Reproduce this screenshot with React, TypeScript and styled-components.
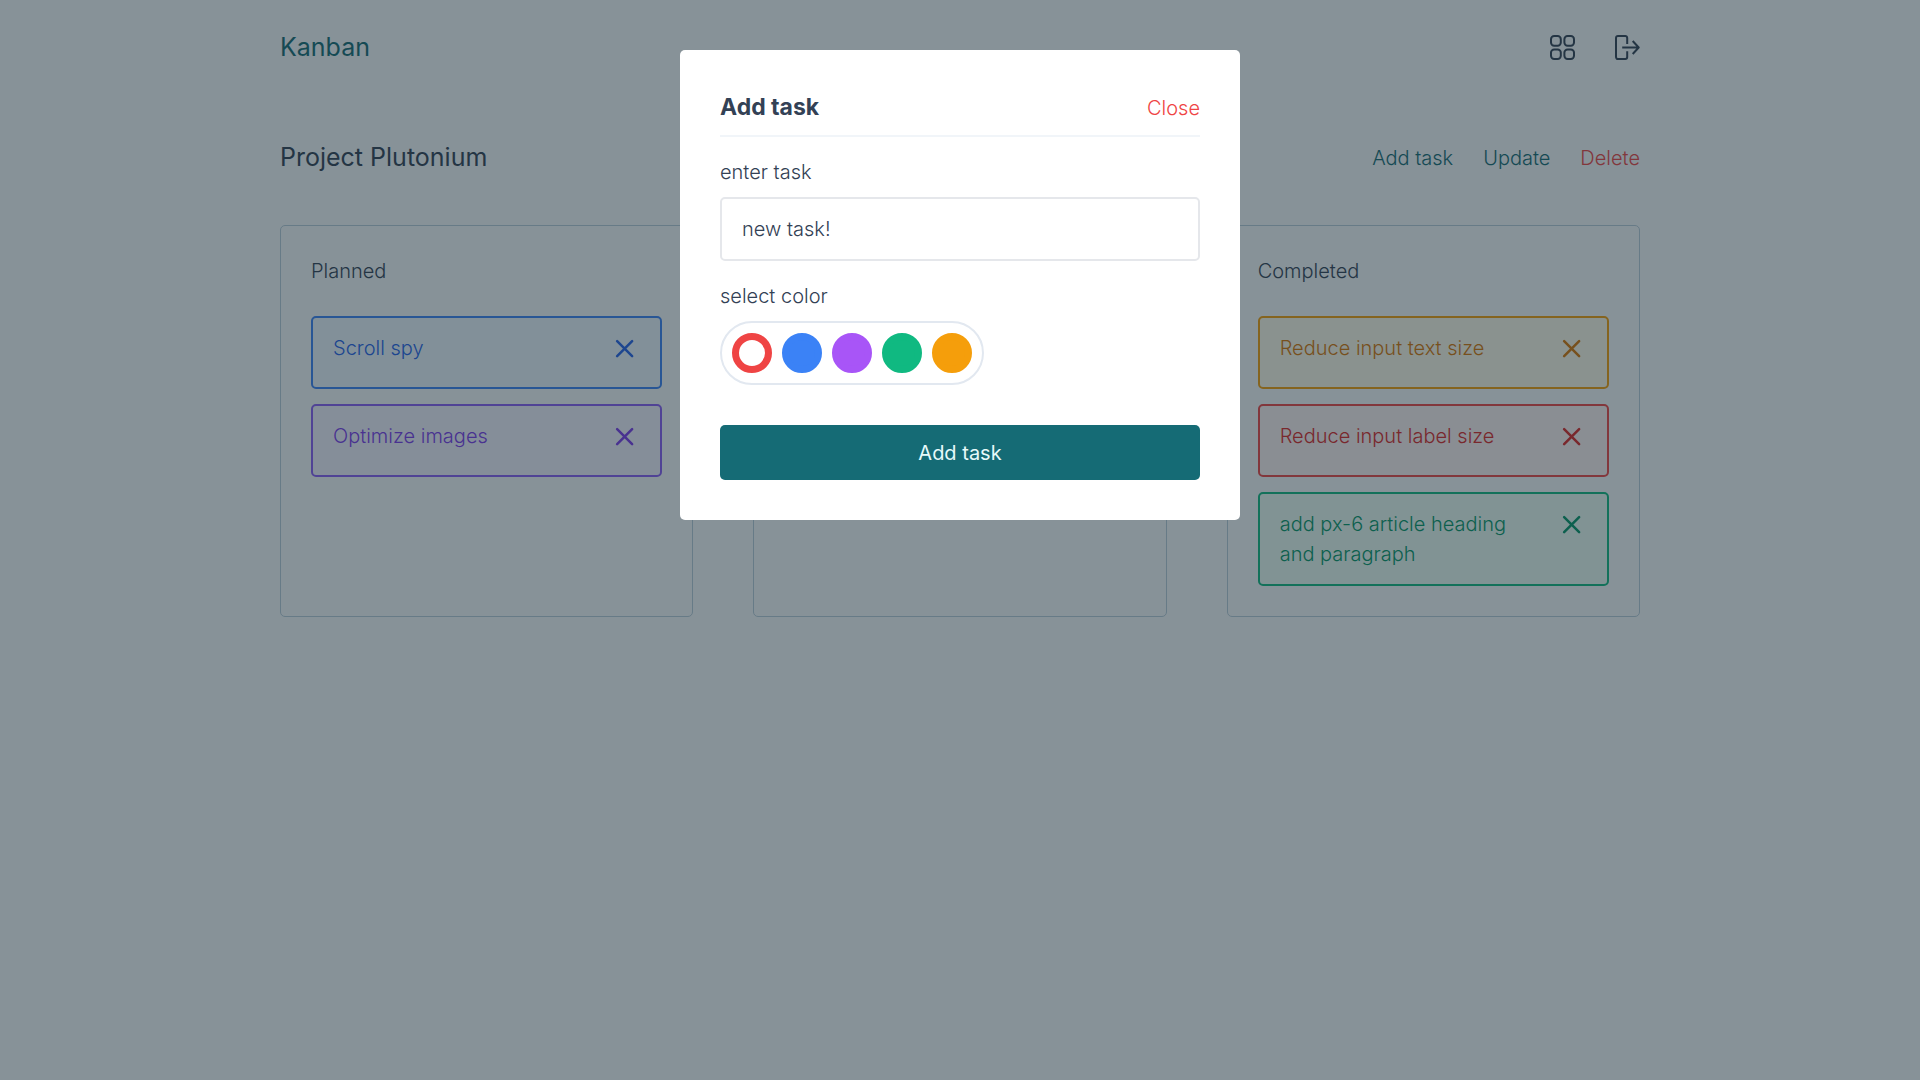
import React, { useState } from "react";
import styled, { createGlobalStyle } from "styled-components";

const GlobalStyle = createGlobalStyle`
  *, *::before, *::after { box-sizing: border-box; }
  body {
    margin: 0;
    background: #f8fafc;
    color: #334155;
    font-family: Inter, "Liberation Sans", sans-serif;
    font-size: 20px;
    font-weight: 300;
    line-height: 30px;
  }
  h1, h2, h3, p, ul, fieldset { margin: 0; padding: 0; }
  button, input { font: inherit; color: inherit; }
`;

type Tone = "red" | "blue" | "violet" | "green" | "amber";

const tones: Record<Tone, { line: string; text: string; fill: string; swatch: string }> = {
  red: { line: "#ef4444", text: "#dc2626", fill: "#fef2f2", swatch: "#ef4444" },
  blue: { line: "#3b82f6", text: "#2563eb", fill: "#eff6ff", swatch: "#3b82f6" },
  violet: { line: "#8b5cf6", text: "#7c3aed", fill: "#f5f3ff", swatch: "#a855f7" },
  green: { line: "#10b981", text: "#059669", fill: "#ecfdf5", swatch: "#10b981" },
  amber: { line: "#f59e0b", text: "#d97706", fill: "#fffbeb", swatch: "#f59e0b" },
};

const Page = styled.div`
  width: 100%;
  max-width: 1400px;
  margin: 0 auto;
  padding: 0 20px;
`;

const TopBar = styled.header`
  display: flex;
  align-items: center;
  justify-content: space-between;
  padding: 30px 0;
`;

const Brand = styled.a`
  color: #156b75;
  font-size: 25px;
  font-weight: 400;
  line-height: 35px;
  text-decoration: none;
`;

const TopNav = styled.nav`
  display: flex;
  gap: 40px;
`;

const PlainButton = styled.button<{ $color?: string }>`
  display: block;
  padding: 0;
  border: 0;
  background: none;
  color: ${(p) => p.$color ?? "inherit"};
  cursor: pointer;

  svg {
    display: block;
  }
`;

const ProjectBar = styled.div`
  display: flex;
  align-items: center;
  justify-content: space-between;
  padding: 45px 0 50px;
`;

const ProjectName = styled.h1`
  font-size: 25px;
  font-weight: 400;
  line-height: 35px;
`;

const Actions = styled.div`
  display: flex;
  gap: 30px;
`;

const Board = styled.main`
  display: grid;
  grid-template-columns: repeat(3, minmax(0, 1fr));
  gap: 60px;
`;

const Column = styled.section`
  padding: 30px;
  border: 1px solid #b9ccda;
  border-radius: 5px;
`;

const ColumnTitle = styled.h2`
  font-size: 20px;
  font-weight: inherit;
  line-height: 30px;
`;

const TaskList = styled.ul`
  display: grid;
  gap: 15px;
  margin-top: 30px;
  list-style: none;
`;

const Task = styled.li<{ $tone: Tone }>`
  display: flex;
  align-items: flex-start;
  justify-content: space-between;
  gap: 20px;
  min-height: 73px;
  padding: 15px 20px;
  border: 2px solid ${(p) => tones[p.$tone].line};
  border-radius: 5px;
  background: ${(p) => tones[p.$tone].fill};
  color: ${(p) => tones[p.$tone].text};
`;

const Overlay = styled.div`
  position: fixed;
  inset: 0;
  display: flex;
  align-items: flex-start;
  justify-content: center;
  padding: 50px 20px;
  background: rgba(22, 42, 52, 0.5);
`;

const Dialog = styled.form`
  width: 100%;
  max-width: 560px;
  padding: 40px;
  border-radius: 5px;
  background: #fff;
`;

const DialogHead = styled.div`
  display: flex;
  align-items: center;
  justify-content: space-between;
  padding-bottom: 10px;
  border-bottom: 2px solid #f1f5f9;
`;

const DialogTitle = styled.h2`
  font-size: 23px;
  font-weight: 700;
  line-height: 35px;
`;

const Label = styled.label`
  display: block;
  margin: 20px 0 10px;
`;

const TextInput = styled.input`
  display: block;
  width: 100%;
  height: 64px;
  padding: 15px 20px;
  border: 2px solid #e5e7eb;
  border-radius: 5px;
  background: #fff;
  outline: none;
`;

const ColorField = styled.fieldset`
  min-width: 0;
  border: 0;
`;

const Legend = styled.legend`
  padding: 20px 0 10px;
`;

const Swatches = styled.div`
  display: flex;
  gap: 10px;
  width: fit-content;
  padding: 10px;
  border: 2px solid #e2e8f0;
  border-radius: 32px;
`;

const Swatch = styled.input<{ $tone: Tone }>`
  appearance: none;
  width: 40px;
  height: 40px;
  margin: 0;
  border: 7px solid ${(p) => tones[p.$tone].swatch};
  border-radius: 50%;
  background: ${(p) => tones[p.$tone].swatch};
  cursor: pointer;

  &:checked {
    background: #fff;
  }
`;

const Submit = styled.button`
  display: block;
  width: 100%;
  height: 55px;
  margin-top: 40px;
  padding: 0 20px;
  border: 0;
  border-radius: 5px;
  background: #156b75;
  color: #e6fafa;
  font-weight: 400;
  cursor: pointer;
`;

const GridIcon = () => (
  <svg width="25" height="25" viewBox="0 0 25 25" fill="none" stroke="currentColor" strokeWidth="2" aria-hidden="true">
    <rect x="1" y="1" width="9.8" height="9.8" rx="3.2" />
    <rect x="14.4" y="1" width="9.6" height="9.8" rx="3.2" />
    <rect x="1" y="14.4" width="9.8" height="9.6" rx="3.2" />
    <rect x="14.4" y="14.4" width="9.6" height="9.6" rx="3.2" />
  </svg>
);

const ExitIcon = () => (
  <svg width="25" height="25" viewBox="0 0 25 25" fill="none" stroke="currentColor" strokeWidth="2" strokeLinejoin="round" aria-hidden="true">
    <path d="M12.2 9V2.9a1.9 1.9 0 0 0-1.9-1.9H2.9A1.9 1.9 0 0 0 1 2.9v19.2A1.9 1.9 0 0 0 2.9 24h7.4a1.9 1.9 0 0 0 1.9-1.9V16.2" />
    <path d="M7.2 12.5H23.6M17.7 6l6 6.5-6 6.5" />
  </svg>
);

const CrossIcon = () => (
  <svg width="30" height="30" viewBox="0 0 24 24" fill="none" stroke="currentColor" strokeWidth="2" strokeLinecap="round" aria-hidden="true">
    <path d="M5.7 18.5l12-12M5.7 6.5l12 12" />
  </svg>
);

const columns: { title: string; visible: boolean; tasks: { text: string; tone: Tone }[] }[] = [
  {
    title: "Planned",
    visible: true,
    tasks: [
      { text: "Scroll spy", tone: "blue" },
      { text: "Optimize images", tone: "violet" },
    ],
  },
  { title: "Ongoing", visible: false, tasks: [] },
  {
    title: "Completed",
    visible: true,
    tasks: [
      { text: "Reduce input text size", tone: "amber" },
      { text: "Reduce input label size", tone: "red" },
      { text: "add px-6 article heading and paragraph", tone: "green" },
    ],
  },
];

const palette: Tone[] = ["red", "blue", "violet", "green", "amber"];

export default function App() {
  const [name, setName] = useState("new task!");
  const [color, setColor] = useState<Tone>("red");

  return (
    <>
      <GlobalStyle />
      <Page>
        <TopBar>
          <Brand href="#">Kanban</Brand>
          <TopNav>
            <PlainButton type="button" aria-label="Projects"><GridIcon /></PlainButton>
            <PlainButton type="button" aria-label="Log out"><ExitIcon /></PlainButton>
          </TopNav>
        </TopBar>
        <ProjectBar>
          <ProjectName>Project Plutonium</ProjectName>
          <Actions>
            <PlainButton type="button" $color="#156b75">Add task</PlainButton>
            <PlainButton type="button" $color="#156b75">Update</PlainButton>
            <PlainButton type="button" $color="#ef4444">Delete</PlainButton>
          </Actions>
        </ProjectBar>
        <Board>
          {columns.map((column) => (
            <Column key={column.title} aria-label={column.title}>
              {column.visible && <ColumnTitle>{column.title}</ColumnTitle>}
              <TaskList>
                {column.tasks.map((task) => (
                  <Task key={task.text} $tone={task.tone}>
                    <p>{task.text}</p>
                    <PlainButton type="button" aria-label={`Remove ${task.text}`}><CrossIcon /></PlainButton>
                  </Task>
                ))}
              </TaskList>
            </Column>
          ))}
        </Board>
      </Page>
      <Overlay>
        <Dialog role="dialog" aria-labelledby="dialog-title" onSubmit={(e) => e.preventDefault()}>
          <DialogHead>
            <DialogTitle id="dialog-title">Add task</DialogTitle>
            <PlainButton type="button" $color="#ef4444">Close</PlainButton>
          </DialogHead>
          <Label htmlFor="task-name">enter task</Label>
          <TextInput id="task-name" type="text" value={name} onChange={(e) => setName(e.target.value)} />
          <ColorField>
            <Legend>select color</Legend>
            <Swatches>
              {palette.map((tone) => (
                <Swatch
                  key={tone}
                  type="radio"
                  name="color"
                  aria-label={tone}
                  $tone={tone}
                  checked={color === tone}
                  onChange={() => setColor(tone)}
                />
              ))}
            </Swatches>
          </ColorField>
          <Submit type="submit">Add task</Submit>
        </Dialog>
      </Overlay>
    </>
  );
}
